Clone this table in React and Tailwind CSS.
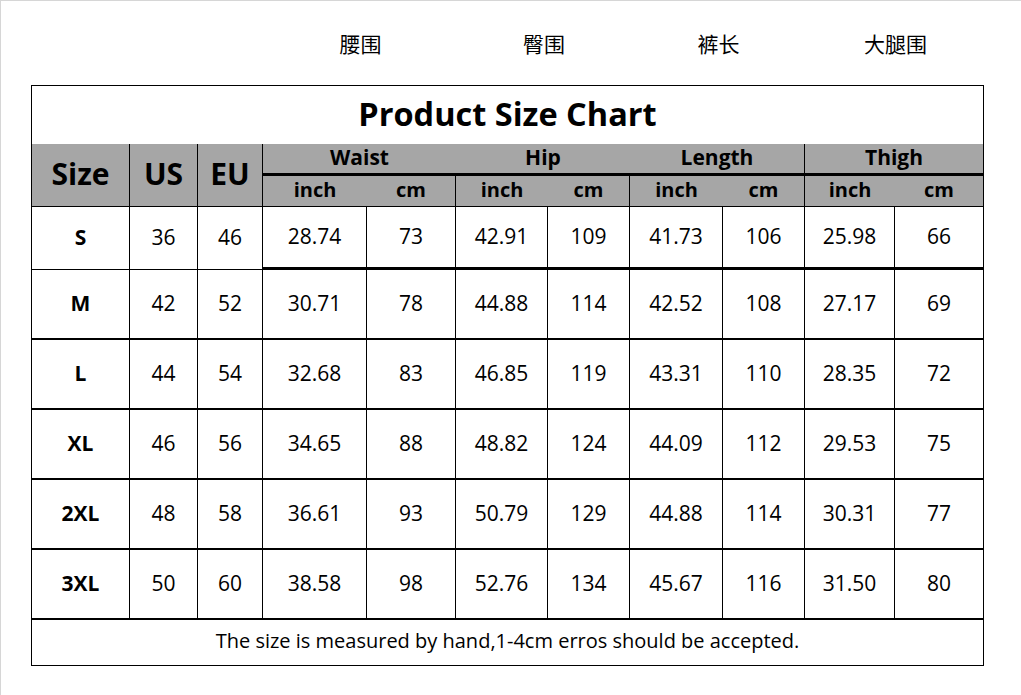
import React from 'react';

const rows = [
  { size: 'S', us: 36, eu: 46, vals: ['28.74', '73', '42.91', '109', '41.73', '106', '25.98', '66'] },
  { size: 'M', us: 42, eu: 52, vals: ['30.71', '78', '44.88', '114', '42.52', '108', '27.17', '69'] },
  { size: 'L', us: 44, eu: 54, vals: ['32.68', '83', '46.85', '119', '43.31', '110', '28.35', '72'] },
  { size: 'XL', us: 46, eu: 56, vals: ['34.65', '88', '48.82', '124', '44.09', '112', '29.53', '75'] },
  { size: '2XL', us: 48, eu: 58, vals: ['36.61', '93', '50.79', '129', '44.88', '114', '30.31', '77'] },
  { size: '3XL', us: 50, eu: 60, vals: ['38.58', '98', '52.76', '134', '45.67', '116', '31.50', '80'] },
];

const groups = ['Waist', 'Hip', 'Length', 'Thigh'];
const labels = ['腰围', '臀围', '裤长', '大腿围'];

const cols = 'grid-cols-[98px_68px_65px_104px_89px_92px_82px_93px_82px_90px_88px]';

export default function App() {
  return (
    <div className="w-[1021px] h-[695px] bg-white border-t border-l border-[#d6d6d6] font-['Open_Sans','Noto_Sans_CJK_SC',sans-serif] text-black overflow-hidden">
      {/* chinese labels above the chart */}
      <div className={`grid ${cols} ml-[31px] w-[953px] h-[84px] pl-px`}>
        <div className="col-span-3" />
        {labels.map((l, i) => (
          <div key={l} className={`col-span-2 ${i === 3 ? 'pl-px' : ''} flex justify-center pt-[27px] text-[21px] leading-[30px] font-['Noto_Sans_CJK_SC',sans-serif]`}>
            {l}
          </div>
        ))}
      </div>

      <div className="ml-[30px] w-[953px] border border-black">
        <div className="h-[58px] flex items-center justify-center text-[32.5px] font-bold leading-none pb-[2px]">
          Product Size Chart
        </div>

        <div className={`grid ${cols} grid-rows-[32px_31px] bg-[#a6a6a6] font-bold`}>
          {['Size', 'US', 'EU'].map((h) => (
            <div key={h} className="row-span-2 border-r border-b border-black flex items-center justify-center text-[30px] leading-none pb-[2px]">
              {h}
            </div>
          ))}
          {groups.map((g, i) => (
            <div key={g} className={`col-span-2 border-b-[3px] border-black flex items-center justify-center text-[21px] leading-none pb-[2px] ${i === 2 ? 'border-r' : ''}`}>
              {g}
            </div>
          ))}
          {groups.map((g, i) => (
            <React.Fragment key={g + 'u'}>
              <div className="border-b border-black flex items-center justify-center text-[20px] leading-none pb-[3px]">inch</div>
              <div className={`border-b border-black flex items-center justify-center text-[20px] leading-none pb-[3px] ${i < 3 ? 'border-r' : ''}`}>cm</div>
            </React.Fragment>
          ))}
        </div>

        {rows.map((r, ri) => {
          const first = ri === 0;
          const h = first ? 'h-[63px]' : 'h-[70px]';
          const leftB = first ? 'border-b' : 'border-b-2';
          const dataB = first ? 'border-b-[3px]' : 'border-b-2';
          return (
            <div key={r.size} className={`grid ${cols} ${h} text-[21px]`}>
              <div className={`border-r ${leftB} border-black flex items-center justify-center font-bold`}>{r.size}</div>
              <div className={`border-r ${leftB} border-black flex items-center justify-center`}>{r.us}</div>
              <div className={`border-r ${leftB} border-black flex items-center justify-center`}>{r.eu}</div>
              {r.vals.map((v, vi) => (
                <div key={vi} className={`${vi < 7 ? 'border-r' : ''} ${dataB} border-black flex items-center justify-center`}>
                  {v}
                </div>
              ))}
            </div>
          );
        })}

        <div className="h-[45px] flex items-center justify-center text-[20px] pb-[3px]">
          The size is measured by hand,1-4cm erros should be accepted.
        </div>
      </div>
    </div>
  );
}
